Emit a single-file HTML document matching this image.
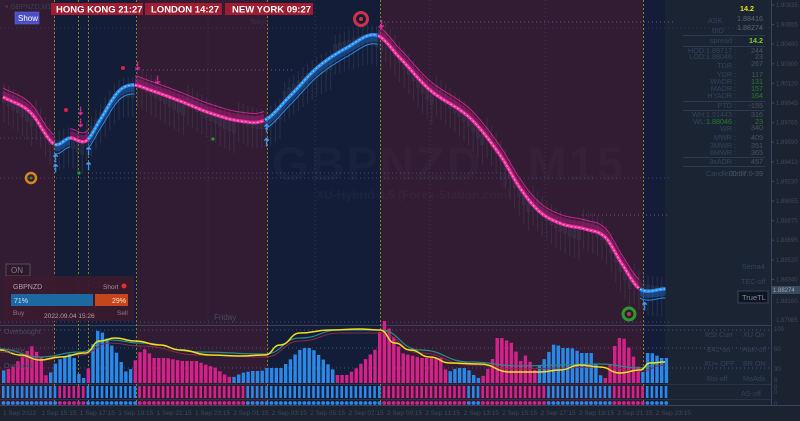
<!DOCTYPE html>
<html><head><meta charset="utf-8">
<style>
html,body{margin:0;padding:0;background:#1a2230;width:800px;height:421px;overflow:hidden;font-family:"Liberation Sans",sans-serif}
svg{display:block}
</style></head><body>
<svg id="s" width="800" height="421" viewBox="0 0 800 421" xmlns="http://www.w3.org/2000/svg" font-family="Liberation Sans, sans-serif">
<rect width="800" height="421" fill="#1b2331"/>
<rect x="0" y="0" width="55" height="405" fill="#311c33"/>
<rect x="55" y="0" width="82" height="405" fill="#131d38"/>
<rect x="137" y="0" width="131" height="405" fill="#311c33"/>
<rect x="268" y="0" width="112" height="405" fill="#131d38"/>
<rect x="380" y="0" width="263" height="405" fill="#311c33"/>
<rect x="643" y="0" width="22" height="405" fill="#131d38"/>
<rect x="665" y="0" width="106" height="405" fill="#1b2433"/>
<line x1="0" y1="325.5" x2="771" y2="325.5" stroke="#3a4458" stroke-width="1"/>
<line x1="0" y1="384.5" x2="771" y2="384.5" stroke="#2a3344" stroke-width="1"/>
<line x1="0" y1="399.5" x2="771" y2="399.5" stroke="#2a3344" stroke-width="1"/>
<line x1="771.5" y1="0" x2="771.5" y2="405" stroke="#3a4458"/>
<rect x="0" y="405" width="800" height="16" fill="#1b2331"/>
<line x1="0" y1="405.5" x2="800" y2="405.5" stroke="#3a4458"/>
<g stroke="#3a3a5a" stroke-dasharray="1,3" stroke-width="1" opacity="0.8">
<line x1="0" y1="28" x2="771" y2="28"/>
<line x1="135" y1="70" x2="295" y2="70" stroke="#a04ab0"/>
<line x1="380" y1="22" x2="675" y2="22" stroke="#a04ab0"/>
<line x1="0" y1="138" x2="55" y2="138" stroke="#4050a0"/>
<line x1="0" y1="178" x2="670" y2="178" stroke="#4050a0"/>
<line x1="92" y1="173" x2="510" y2="173" stroke="#4050a0"/>
<line x1="582" y1="215" x2="670" y2="215" stroke="#a04ab0"/>
<line x1="0" y1="322" x2="670" y2="322" stroke="#6050a0"/>
<line x1="0" y1="330" x2="771" y2="330" stroke="#5a5a8a"/>
<line x1="0" y1="348" x2="771" y2="348" stroke="#5a5a8a"/>
<line x1="0" y1="368" x2="771" y2="368" stroke="#5a5a8a"/>
<line x1="208" y1="0" x2="208" y2="325"/>
<line x1="315" y1="0" x2="315" y2="325"/>
<line x1="430" y1="0" x2="430" y2="325"/>
<line x1="545" y1="0" x2="545" y2="325"/>
</g>
<g stroke="#8a8020" stroke-dasharray="2,2" stroke-width="1">
<line x1="54.5" y1="0" x2="54.5" y2="405"/>
<line x1="78.5" y1="0" x2="78.5" y2="405"/>
<line x1="88.5" y1="0" x2="88.5" y2="405"/>
<line x1="136.5" y1="0" x2="136.5" y2="405"/>
<line x1="267.5" y1="0" x2="267.5" y2="405"/>
<line x1="380.5" y1="0" x2="380.5" y2="405"/>
<line x1="643.5" y1="0" x2="643.5" y2="405"/>
</g>
<text x="272" y="180" font-size="47" font-weight="bold" fill="#ffffff" fill-opacity="0.025" letter-spacing="2">GBPNZD , M15</text>
<text x="316" y="199" font-size="12" font-weight="bold" fill="#ffffff" fill-opacity="0.03">XU-Hybrid 4.5 (Forex-Station.com)</text>
<g id="candles" stroke="#5a5a70" stroke-width="1" fill="none" opacity="0.3"></g>
<g id="curve"></g>
<circle cx="31" cy="178" r="5" fill="none" stroke="#d9861a" stroke-width="2.5"/><circle cx="31" cy="178" r="1.5" fill="#2a8a2a"/>
<circle cx="361" cy="19" r="6.5" fill="none" stroke="#d0304a" stroke-width="3"/><circle cx="361" cy="19" r="2" fill="#d0304a"/>
<circle cx="629" cy="314" r="6" fill="none" stroke="#2a9a2a" stroke-width="3"/><circle cx="629" cy="314" r="2" fill="#b04040"/>
<g fill="#e0289a" font-size="11" font-weight="bold">
<text x="76" y="115">⇣</text><text x="76" y="127">⇣</text><text x="133" y="70">⇣</text><text x="153" y="84">⇣</text><text x="377" y="28">⇣</text>
</g>
<g fill="#3aa0ff" font-size="11" font-weight="bold">
<text x="51" y="162">⇡</text><text x="51" y="172">⇡</text><text x="84" y="155">⇡</text><text x="84" y="170">⇡</text><text x="262" y="132">⇡</text><text x="262" y="146">⇡</text><text x="640" y="310">⇡</text>
</g>
<circle cx="66" cy="110" r="2" fill="#e02040"/><circle cx="123" cy="68" r="2" fill="#e02040"/>
<circle cx="79" cy="173" r="1.6" fill="#2a9a2a"/><circle cx="213" cy="139" r="1.6" fill="#2a9a2a"/>
<g id="hist"></g>
<path id="teal" fill="none" stroke="#2a8a8a" stroke-width="1.2"/>
<path id="red" fill="none" stroke="#8a2a4a" stroke-width="1"/>
<path id="yel" fill="none" stroke="#f0e020" stroke-width="1.5"/>
<text x="4" y="334" font-size="7" fill="#4a4a60">Overbought</text>
<text x="4" y="353" font-size="7" fill="#4a4a60">Middle</text>
<text x="4" y="368" font-size="7" fill="#4a4a60">Oversold</text>
<text x="214" y="320" font-size="8" fill="#4a4a60">Friday</text>
<text x="5" y="9" font-size="7" fill="#3a4050">▾ GBPNZD,M15</text>
<rect x="51" y="3" width="92" height="12" fill="#a01c30"/>
<rect x="145" y="3" width="77" height="12" fill="#a01c30"/>
<rect x="225" y="3" width="88" height="12" fill="#a01c30"/>
<g font-size="9.5" font-weight="bold" fill="#ffffff">
<text x="56" y="12.5">HONG KONG  21:27</text>
<text x="151" y="12.5">LONDON  14:27</text>
<text x="232" y="12.5">NEW YORK  09:27</text>
</g>
<rect x="15" y="12" width="24" height="12" fill="#4a4fc8" stroke="#6a70e0" stroke-width="0.5"/>
<text x="18" y="21" font-size="8" fill="#fff">Show</text>
<text x="250" y="24" font-size="7" fill="#3a3050">Tokyo</text>
<rect x="6" y="264" width="24" height="12" fill="#2a1a2a" stroke="#5a4a5a"/>
<text x="11" y="273" font-size="8" fill="#8a7a8a">ON</text>
<rect x="3" y="276" width="131" height="45" fill="#3b1a2e" fill-opacity="0.92"/>
<text x="13" y="289" font-size="7" fill="#b0a0b0">GBPNZD</text>
<text x="103" y="289" font-size="6.5" fill="#a090a0">Short</text>
<circle cx="124" cy="286" r="2.5" fill="#e03030"/>
<rect x="11" y="294" width="82" height="12" fill="#1d68a0"/>
<rect x="95" y="294" width="33" height="12" fill="#c4461c"/>
<text x="14" y="303" font-size="7" fill="#d0e0ff">71%</text>
<text x="112" y="303" font-size="7" fill="#ffe0d0">29%</text>
<text x="13" y="315" font-size="6.5" fill="#8a7a8a">Buy</text>
<text x="44" y="318" font-size="6.5" fill="#b0a0b0">2022.09.04 15:26</text>
<text x="117" y="315" font-size="6.5" fill="#8a7a8a">Sell</text>
<g font-size="7.2" fill="#34425a">
<text x="740" y="11" fill="#e8e020" font-weight="bold">14.2</text>
<text x="708" y="23">ASK</text><text x="763" y="21" text-anchor="end" fill="#5a6270">1.88416</text>
<text x="712" y="33">BID</text><text x="763" y="30" text-anchor="end" fill="#5a6270">1.88274</text>
<text x="736" y="43" text-anchor="end">spread :</text><text x="763" y="43" text-anchor="end" fill="#7ad020" font-weight="bold">14.2</text>
<text x="736" y="53" text-anchor="end">HOD:1.89717 :</text><text x="763" y="53" text-anchor="end" fill="#4a5260">244</text>
<text x="736" y="59" text-anchor="end">LOD:1.88046 :</text><text x="763" y="59" text-anchor="end" fill="#4a5260">23</text>
<text x="736" y="68" text-anchor="end">TDR :</text><text x="763" y="66" text-anchor="end" fill="#4a5260">267</text>
<text x="736" y="77" text-anchor="end">YDR :</text><text x="763" y="77" text-anchor="end" fill="#4a5260">117</text>
<text x="736" y="84" text-anchor="end">WADR :</text><text x="763" y="84" text-anchor="end" fill="#2a7a2a">131</text>
<text x="736" y="91" text-anchor="end">MADR :</text><text x="763" y="91" text-anchor="end" fill="#2a7a2a">157</text>
<text x="736" y="98" text-anchor="end">HYADR :</text><text x="763" y="98" text-anchor="end" fill="#2a7a2a">164</text>
<text x="736" y="108" text-anchor="end">PTD :</text><text x="763" y="108" text-anchor="end" fill="#4a5260">-155</text>
<text x="736" y="117" text-anchor="end">WH:1.91443 :</text><text x="763" y="117" text-anchor="end" fill="#4a5260">316</text>
<text x="736" y="124" text-anchor="end">WL:<tspan fill="#2a7a2a">1.88046</tspan> :</text><text x="763" y="124" text-anchor="end" fill="#2a7a2a">23</text>
<text x="736" y="131" text-anchor="end">WR :</text><text x="763" y="130" text-anchor="end" fill="#4a5260">340</text>
<text x="736" y="140" text-anchor="end">MWR :</text><text x="763" y="140" text-anchor="end" fill="#4a5260">409</text>
<text x="736" y="148" text-anchor="end">3MWR :</text><text x="763" y="148" text-anchor="end" fill="#4a5260">351</text>
<text x="736" y="155" text-anchor="end">6MWR :</text><text x="763" y="155" text-anchor="end" fill="#4a5260">365</text>
<text x="736" y="164" text-anchor="end">3xADR :</text><text x="763" y="164" text-anchor="end" fill="#4a5260">457</text>
<text x="706" y="176">Candle Time</text><text x="763" y="176" text-anchor="end" fill="#4a5260">00:07:0-39</text>
<text x="742" y="269">Sema4</text>
<text x="741" y="284">TEC-off</text>
<text x="705" y="337">RSI Curr</text><text x="743" y="337">XU On</text>
<text x="707" y="352">E42-on</text><text x="742" y="352">HaK-off</text>
<text x="704" y="366">XU+ OFF</text><text x="743" y="366">BR ON</text>
<text x="707" y="381">Rsi-off</text><text x="743" y="381">MaAdx</text>
<text x="741" y="396">AS-off</text>
</g>
<g stroke="#34405a" stroke-width="0.8">
<line x1="683" y1="35.5" x2="765" y2="35.5"/><line x1="683" y1="46.5" x2="765" y2="46.5"/>
<line x1="683" y1="101.5" x2="765" y2="101.5"/><line x1="683" y1="110.5" x2="765" y2="110.5"/>
<line x1="683" y1="157.5" x2="765" y2="157.5"/><line x1="683" y1="166.5" x2="765" y2="166.5"/>
</g>
<rect x="738" y="291" width="30" height="12" fill="#0e1420" stroke="#3a4458"/>
<text x="742" y="300" font-size="7.5" fill="#7a8a9a">TrueTL</text>
<rect x="771" y="286" width="29" height="8" fill="#3a4a60"/>
<text x="773" y="292" font-size="6" fill="#9aa">1.88274</text>
<g id="axis" font-size="6" fill="#3e485c"></g>
<g id="times" font-size="6.5" fill="#3e485c"></g>
</svg>
<script>
var NS="http://www.w3.org/2000/svg";
function el(t,a,p){var e=document.createElementNS(NS,t);for(var k in a)e.setAttribute(k,a[k]);if(p)p.appendChild(e);return e;}
function interp(pts,x){if(x<=pts[0][0])return pts[0][1];for(var i=0;i<pts.length-1;i++){if(x>=pts[i][0]&&x<=pts[i+1][0]){var t=(x-pts[i][0])/(pts[i+1][0]-pts[i][0]);return pts[i][1]+t*(pts[i+1][1]-pts[i][1]);}}return pts[pts.length-1][1];}
function interpS(p,x){var n=p.length;if(x<=p[0][0])return p[0][1];if(x>=p[n-1][0])return p[n-1][1];
 for(var i=0;i<n-1;i++){if(x>=p[i][0]&&x<=p[i+1][0]){var h=p[i+1][0]-p[i][0],t=(x-p[i][0])/h;
 var m0=i>0?(p[i+1][1]-p[i-1][1])/(p[i+1][0]-p[i-1][0]):(p[1][1]-p[0][1])/(p[1][0]-p[0][0]);
 var m1=i<n-2?(p[i+2][1]-p[i][1])/(p[i+2][0]-p[i][0]):(p[n-1][1]-p[n-2][1])/(p[n-1][0]-p[n-2][0]);
 var t2=t*t,t3=t2*t;return (2*t3-3*t2+1)*p[i][1]+(t3-2*t2+t)*h*m0+(-2*t3+3*t2)*p[i+1][1]+(t3-t2)*h*m1;}}}
function smooth(pts){var d="M"+pts[0][0]+","+pts[0][1];for(var i=1;i<pts.length;i++){var p0=pts[i-1],p1=pts[i];var mx=(p0[0]+p1[0])/2;d+=" C"+mx+","+p0[1]+" "+mx+","+p1[1]+" "+p1[0]+","+p1[1];}return d;}
var main=[[3,97],[30,112],[54,144],[70,138],[86,141],[100,120],[118,92],[132,85],[150,90],[180,101],[210,113],[240,121],[265,120],[290,96],[318,67],[348,47],[376,35],[400,58],[430,90],[470,118],[500,155],[520,188],[540,212],[562,224],[585,229],[605,237],[622,264],[640,289],[665,289]];
var segs=[[3,55,"pink"],[55,70,"blue"],[70,88,"pink"],[88,135,"blue"],[135,265,"pink"],[265,378,"blue"],[378,640,"pink"],[640,666,"blue"]];
var cv=document.getElementById("curve"),cd=document.getElementById("candles");
for(var x=4;x<665;x+=4.6){var y=interpS(main,x);var o=((x*37)%13)-6;el("line",{x1:x,y1:y-14+o,x2:x,y2:y+26+o},cd);el("rect",{x:x-1.3,y:y-4+o,width:2.6,height:10},cd);}
segs.forEach(function(sg){var p=[];for(var x=sg[0];x<=sg[1]+0.01;x+=1.5)p.push([x,interpS(main,x)]);
 var pink=sg[2]=="pink";var off=pink?-9:9;var col=pink?"#d0208a":"#2a8ae8";
 var d2="M";p.forEach(function(q,i){d2+=(i?"L":"")+q[0].toFixed(1)+","+(q[1]+off*0.75).toFixed(1)+" ";});p.slice().reverse().forEach(function(q){d2+="L"+q[0].toFixed(1)+","+q[1].toFixed(1)+" ";});
 el("path",{d:d2+"Z",fill:pink?"#a01870":"#1858a8","fill-opacity":0.6},cv);
 var d="M";p.forEach(function(q,i){d+=(i?"L":"")+q[0].toFixed(1)+","+(q[1]+off).toFixed(1)+" ";});
 el("path",{d:d,fill:"none",stroke:col,"stroke-width":1},cv);
 var d3="M";p.forEach(function(q,i){d3+=(i?"L":"")+q[0].toFixed(1)+","+q[1].toFixed(1)+" ";});
 el("path",{d:d3,fill:"none",stroke:pink?"#f0309f":"#2a90f0","stroke-width":3.4},cv);
 el("path",{d:d3,fill:"none",stroke:pink?"#ffb0e0":"#a0d8ff","stroke-width":0.8,"stroke-dasharray":"2,2"},cv);
});
var hk=[[0,12],[10,15],[30,37],[40,25],[45,5],[50,12],[55,22],[70,30],[75,20],[78,5],[85,5],[90,35],[97,55],[105,45],[115,30],[125,10],[130,15],[137,30],[145,35],[150,25],[165,25],[180,22],[195,22],[205,18],[215,15],[220,10],[230,5],[240,10],[250,12],[260,12],[265,15],[280,15],[290,25],[300,35],[310,35],[320,25],[330,15],[335,8],[345,8],[355,15],[365,25],[375,35],[380,62],[383,62],[390,50],[400,30],[420,25],[440,25],[445,10],[455,15],[465,15],[475,5],[480,5],[490,20],[495,45],[500,45],[510,40],[520,20],[525,30],[532,12],[540,20],[553,40],[560,35],[570,35],[580,30],[590,30],[600,5],[605,5],[615,45],[622,45],[630,30],[636,18],[640,5],[645,30],[650,30],[660,25],[665,25]];
var hc=[[0,5,"b"],[5,45,"p"],[45,82,"b"],[82,88,"p"],[88,130,"b"],[130,232,"p"],[232,335,"b"],[335,380,"p"],[380,445,"p"],[445,480,"b"],[480,535,"p"],[535,600,"b"],[600,640,"p"],[640,670,"b"]];
var bc=[[0,55,"b"],[55,78,"p"],[78,82,"p"],[82,136,"b"],[136,245,"p"],[245,268,"b"],[268,380,"b"],[380,465,"p"],[465,480,"b"],[480,545,"p"],[545,612,"b"],[612,643,"p"],[643,670,"b"]];
function colAt(a,x){for(var i=0;i<a.length;i++)if(x>=a[i][0]&&x<a[i][1])return a[i][2];return "b";}
var hg=document.getElementById("hist");
for(var x=2;x<665;x+=4.7){var h=interp(hk,x);var c=colAt(hc,x)=="p"?"#d8208a":"#2a88e8";
 el("rect",{x:x,y:383-h,width:3.4,height:h,fill:c},hg);
 var c2=colAt(bc,x)=="p"?"#d8208a":"#2a88e8";
 el("rect",{x:x,y:386,width:2.6,height:12,fill:c2},hg);
 el("circle",{cx:x+1.5,cy:403,r:1.9,fill:c2},hg);}
var yl=[[0,350],[20,355],[40,360],[60,357],[85,353],[100,341],[115,338],[135,341],[160,345],[180,350],[210,355],[240,356],[265,355],[280,345],[300,333],[330,330],[360,329],[380,330],[395,343],[410,350],[430,357],[450,363],[480,364],[510,372],[540,372],[560,370],[580,365],[600,367],[620,373],[640,370],[650,363],[665,362]];
document.getElementById("yel").setAttribute("d",smooth(yl));
var tl=[[0,349],[40,357],[80,352],[110,340],[140,343],[200,352],[265,354],[300,338],[340,330],[380,330],[420,350],[470,362],[520,366],[560,365],[600,364],[640,368],[665,362]];
document.getElementById("teal").setAttribute("d",smooth(tl));
document.getElementById("red").setAttribute("d",smooth(tl.map(function(p){return [p[0],p[1]+3];})));
var ax=document.getElementById("axis");
var pv=["1.90835","1.90655","1.90480","1.90300","1.90120","1.89945","1.89765","1.89590","1.89410","1.89230","1.89055","1.88875","1.88695","1.88520","1.88340"];
pv.forEach(function(v,i){var y=7+i*19.6;el("text",{x:776,y:y},ax).textContent=v;el("line",{x1:771,y1:y-2,x2:774,y2:y-2,stroke:"#3e485c"},ax);});
el("text",{x:776,y:303},ax).textContent="1.88160";el("text",{x:776,y:322},ax).textContent="1.87985";
[["100",331],["50",351],["30",371],["0",382],["0",389],["0",394],["0",406]].forEach(function(a){el("text",{x:774,y:a[1]},ax).textContent=a[0];});
var tg=document.getElementById("times");
var tt=["1 Sep 2022","1 Sep 15:15","1 Sep 17:15","1 Sep 19:15","1 Sep 21:15","1 Sep 23:15","2 Sep 01:15","2 Sep 03:15","2 Sep 05:15","2 Sep 07:15","2 Sep 09:15","2 Sep 11:15","2 Sep 13:15","2 Sep 15:15","2 Sep 17:15","2 Sep 19:15","2 Sep 21:15","2 Sep 23:15"];
tt.forEach(function(t,i){el("text",{x:3+i*38.4,y:415},tg).textContent=t;});
</script>
</body></html>
